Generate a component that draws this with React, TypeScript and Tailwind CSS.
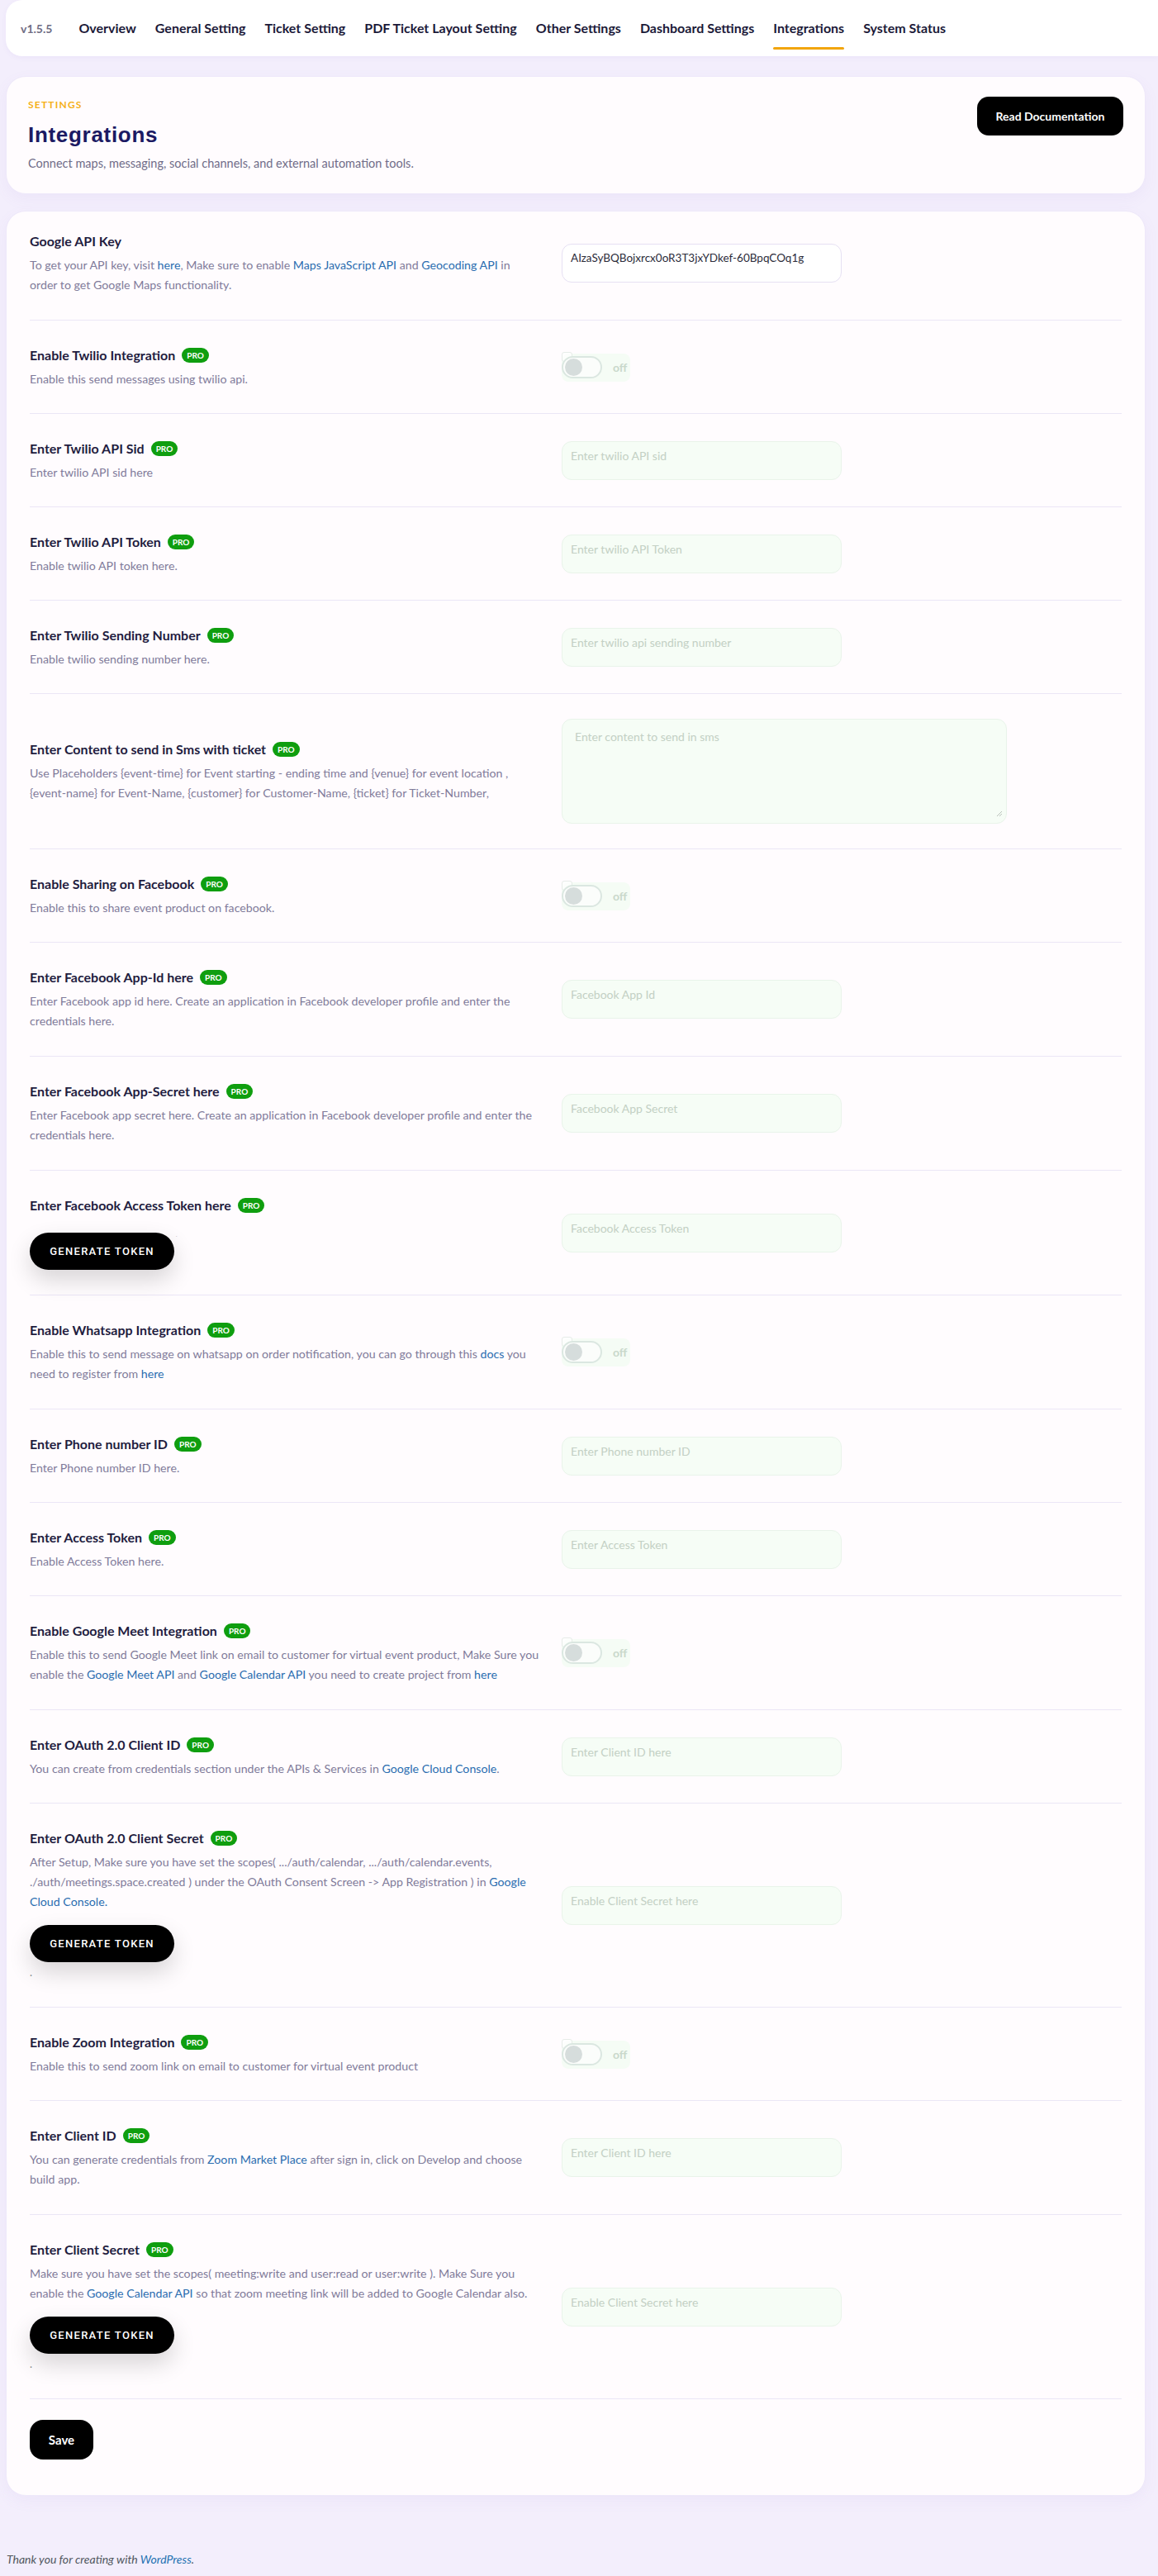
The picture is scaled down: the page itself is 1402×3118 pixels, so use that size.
import React from 'react';

type Control = 'input' | 'toggle' | 'textarea' | 'filled';

type Row = {
  title: string;
  pro?: boolean;
  lines?: React.ReactNode[];
  control: Control;
  placeholder?: string;
  token?: 'inline' | 'below';
};

const A: React.FC<{ children: React.ReactNode }> = ({ children }) => (
  <span className="text-[#2a6db0]">{children}</span>
);

const rows: Row[] = [
  {
    title: 'Google API Key',
    lines: [
      <>To get your API key, visit <A>here</A>, Make sure to enable <A>Maps JavaScript API</A> and <A>Geocoding API</A> in</>,
      <>order to get Google Maps functionality.</>,
    ],
    control: 'filled',
  },
  { title: 'Enable Twilio Integration', pro: true, lines: ['Enable this send messages using twilio api.'], control: 'toggle' },
  { title: 'Enter Twilio API Sid', pro: true, lines: ['Enter twilio API sid here'], control: 'input', placeholder: 'Enter twilio API sid' },
  { title: 'Enter Twilio API Token', pro: true, lines: ['Enable twilio API token here.'], control: 'input', placeholder: 'Enter twilio API Token' },
  { title: 'Enter Twilio Sending Number', pro: true, lines: ['Enable twilio sending number here.'], control: 'input', placeholder: 'Enter twilio api sending number' },
  {
    title: 'Enter Content to send in Sms with ticket',
    pro: true,
    lines: [
      'Use Placeholders {event-time} for Event starting - ending time and {venue} for event location ,',
      '{event-name} for Event-Name, {customer} for Customer-Name, {ticket} for Ticket-Number,',
    ],
    control: 'textarea',
    placeholder: 'Enter content to send in sms',
  },
  { title: 'Enable Sharing on Facebook', pro: true, lines: ['Enable this to share event product on facebook.'], control: 'toggle' },
  {
    title: 'Enter Facebook App-Id here',
    pro: true,
    lines: ['Enter Facebook app id here. Create an application in Facebook developer profile and enter the', 'credentials here.'],
    control: 'input',
    placeholder: 'Facebook App Id',
  },
  {
    title: 'Enter Facebook App-Secret here',
    pro: true,
    lines: ['Enter Facebook app secret here. Create an application in Facebook developer profile and enter the', 'credentials here.'],
    control: 'input',
    placeholder: 'Facebook App Secret',
  },
  { title: 'Enter Facebook Access Token here', pro: true, control: 'input', placeholder: 'Facebook Access Token', token: 'inline' },
  {
    title: 'Enable Whatsapp Integration',
    pro: true,
    lines: [
      <>Enable this to send message on whatsapp on order notification, you can go through this <A>docs</A> you</>,
      <>need to register from <A>here</A></>,
    ],
    control: 'toggle',
  },
  { title: 'Enter Phone number ID', pro: true, lines: ['Enter Phone number ID here.'], control: 'input', placeholder: 'Enter Phone number ID' },
  { title: 'Enter Access Token', pro: true, lines: ['Enable Access Token here.'], control: 'input', placeholder: 'Enter Access Token' },
  {
    title: 'Enable Google Meet Integration',
    pro: true,
    lines: [
      'Enable this to send Google Meet link on email to customer for virtual event product, Make Sure you',
      <>enable the <A>Google Meet API</A> and <A>Google Calendar API</A> you need to create project from <A>here</A></>,
    ],
    control: 'toggle',
  },
  {
    title: 'Enter OAuth 2.0 Client ID',
    pro: true,
    lines: [<>You can create from credentials section under the APIs &amp; Services in <A>Google Cloud Console</A>.</>],
    control: 'input',
    placeholder: 'Enter Client ID here',
  },
  {
    title: 'Enter OAuth 2.0 Client Secret',
    pro: true,
    lines: [
      'After Setup, Make sure you have set the scopes( .../auth/calendar, .../auth/calendar.events,',
      <>./auth/meetings.space.created ) under the OAuth Consent Screen -&gt; App Registration ) in <A>Google</A></>,
      <><A>Cloud Console.</A></>,
    ],
    control: 'input',
    placeholder: 'Enable Client Secret here',
    token: 'below',
  },
  { title: 'Enable Zoom Integration', pro: true, lines: ['Enable this to send zoom link on email to customer for virtual event product'], control: 'toggle' },
  {
    title: 'Enter Client ID',
    pro: true,
    lines: [
      <>You can generate credentials from <A>Zoom Market Place</A> after sign in, click on Develop and choose</>,
      'build app.',
    ],
    control: 'input',
    placeholder: 'Enter Client ID here',
  },
  {
    title: 'Enter Client Secret',
    pro: true,
    lines: [
      'Make sure you have set the scopes( meeting:write and user:read or user:write ). Make Sure you',
      <>enable the <A>Google Calendar API</A> so that zoom meeting link will be added to Google Calendar also.</>,
    ],
    control: 'input',
    placeholder: 'Enable Client Secret here',
    token: 'below',
  },
];

const tabs = ['Overview', 'General Setting', 'Ticket Setting', 'PDF Ticket Layout Setting', 'Other Settings', 'Dashboard Settings', 'Integrations', 'System Status'];

const Pro = () => (
  <span className="ml-2 inline-flex h-[18px] items-center rounded-full bg-[#0f9e0f] px-[6px] text-[10px] font-bold leading-none text-white">
    PRO
  </span>
);

const TokenButton = () => (
  <button className="h-[45px] w-[175px] rounded-full bg-black font-['Roboto',sans-serif] text-[13px] font-medium uppercase tracking-[1.3px] text-white shadow-[0_12px_28px_rgba(0,0,0,0.16)]">
    Generate Token
  </button>
);

const Toggle = () => (
  <div className="relative flex h-[34px] w-[83px] items-center rounded-lg bg-[#f5fcf5]">
    <span className="absolute -top-[2px] left-0 h-[12px] w-[13px] rounded-[3px] border border-[#e6ece8] bg-white/70" />
    <span className="relative flex h-[27px] w-[49px] items-center rounded-full border-2 border-[#dbe7e1] bg-[#fbfdfb] pl-[2px]">
      <span className="h-[21px] w-[21px] rounded-full bg-[#d6dddc]" />
    </span>
    <span className="ml-[13px] text-[14px] font-bold text-[#c9d8cb]">off</span>
  </div>
);

const Field: React.FC<{ row: Row }> = ({ row }) => {
  if (row.control === 'toggle') return <Toggle />;
  if (row.control === 'filled')
    return (
      <div className="h-[47px] w-[339px] rounded-xl border border-[#e6e0f3] bg-white px-[10px] pt-[6px] text-[13.5px] text-[#2c2c3a]">
        AIzaSyBQBojxrcx0oR3T3jxYDkef-60BpqCOq1g
      </div>
    );
  if (row.control === 'textarea')
    return (
      <div className="relative h-[127px] w-[539px] rounded-xl border border-[#e9f4ea] bg-[#f6fdf6] px-[15px] pt-[10px] text-[14px] text-[#c3d0c4]">
        {row.placeholder}
        <svg className="absolute bottom-[7px] right-[4px]" width="8" height="8" viewBox="0 0 8 8">
          <path d="M7 1 1 7M7 4 4 7" stroke="#b9c2ba" strokeWidth="1" />
        </svg>
      </div>
    );
  return (
    <div className="h-[47px] w-[339px] rounded-xl border border-[#e9f4ea] bg-[#f6fdf6] px-[10px] pt-[6px] text-[14px] text-[#c3d0c4]">
      {row.placeholder}
    </div>
  );
};

const SettingRow: React.FC<{ row: Row; first?: boolean }> = ({ row, first }) => {
  const multi = (row.lines?.length ?? 0) > 1 || !!row.token;
  return (
    <div
      className={`grid grid-cols-[644px_1fr] items-center border-b border-[#ebe6f6] ${first ? 'pt-6' : 'pt-[30px]'} ${
        multi ? 'pb-[30px]' : 'pb-[29px]'
      }`}
    >
      <div>
        <div className="flex h-6 items-center text-[16px] font-bold text-[#1f1c3f]">
          {row.title}
          {row.pro && <Pro />}
        </div>
        {row.lines && (
          <div className="mt-[5px] text-[14.2px] leading-6 text-[#7f7b9a]">
            {row.lines.map((l, i) => (
              <div key={i} className="whitespace-nowrap">
                {l}
              </div>
            ))}
          </div>
        )}
        {row.token === 'inline' && (
          <div className="mt-[21px] flex items-start">
            <TokenButton />
            <span className="ml-[2px] text-[6px] leading-none text-[#999]">.</span>
          </div>
        )}
        {row.token === 'below' && (
          <>
            <div className="mt-4">
              <TokenButton />
            </div>
            <div className="h-6 text-[13px] leading-6 text-[#888]">.</div>
          </>
        )}
      </div>
      <div>
        <Field row={row} />
      </div>
    </div>
  );
};

export default function App() {
  return (
    <div className="min-h-screen bg-[#f3eefc] pl-[7px] font-['Lato',sans-serif]">
      <nav className="flex h-[68px] items-center rounded-l-[20px] bg-white pl-[18px] shadow-[0_2px_6px_rgba(120,90,200,0.06)]">
        <span className="mr-[32px] text-[14px] font-bold text-[#6f6d84]">v1.5.5</span>
        <div className="flex h-full items-center gap-[23px]">
          {tabs.map((t) => (
            <div key={t} className="relative flex h-full items-center">
              <span className="text-[16px] font-bold text-[#1b1938]">{t}</span>
              {t === 'Integrations' && (
                <span className="absolute bottom-[8px] left-0 right-0 h-[3px] rounded-sm bg-[#f2a50c]" />
              )}
            </div>
          ))}
        </div>
      </nav>

      <div className="mr-[15px]">
        <header className="mt-6 flex items-start justify-between rounded-3xl border border-[#eee8fa] bg-[#fffcfe] pb-[25px] pl-[26px] pr-[26px] pt-[24px] shadow-[0_6px_18px_rgba(130,100,210,0.06)]">
          <div>
            <div className="mt-[2px] text-[12px] font-bold uppercase leading-4 tracking-[1.2px] text-[#f5b11a]">Settings</div>
            <h1 className="mt-3 font-['Liberation_Sans',Arial,sans-serif] text-[26px] font-bold leading-8 tracking-[0.7px] text-[#1b1a63]">
              Integrations
            </h1>
            <p className="mt-2 text-[14.5px] leading-[22px] text-[#6f6c88]">
              Connect maps, messaging, social channels, and external automation tools.
            </p>
          </div>
          <button className="h-[47px] w-[177px] rounded-[14px] bg-black text-[14px] font-bold text-white">
            Read Documentation
          </button>
        </header>

        <main className="mt-5 rounded-3xl border border-[#eee8fa] bg-[#fffcfe] px-[28px] pb-[27px] shadow-[0_6px_18px_rgba(130,100,210,0.06)]">
          {rows.map((r, i) => (
            <SettingRow key={r.title} row={r} first={i === 0} />
          ))}
          <div className="pb-4 pt-[25px]">
            <button className="h-[48px] w-[77px] rounded-2xl bg-black text-[15px] font-bold text-white">Save</button>
          </div>
        </main>
      </div>

      <footer className="pb-[12px] pl-px pt-[66px] text-[14px] italic text-[#50575e]">
        Thank you for creating with <span className="text-[#2271b1]">WordPress</span>.
      </footer>
    </div>
  );
}
